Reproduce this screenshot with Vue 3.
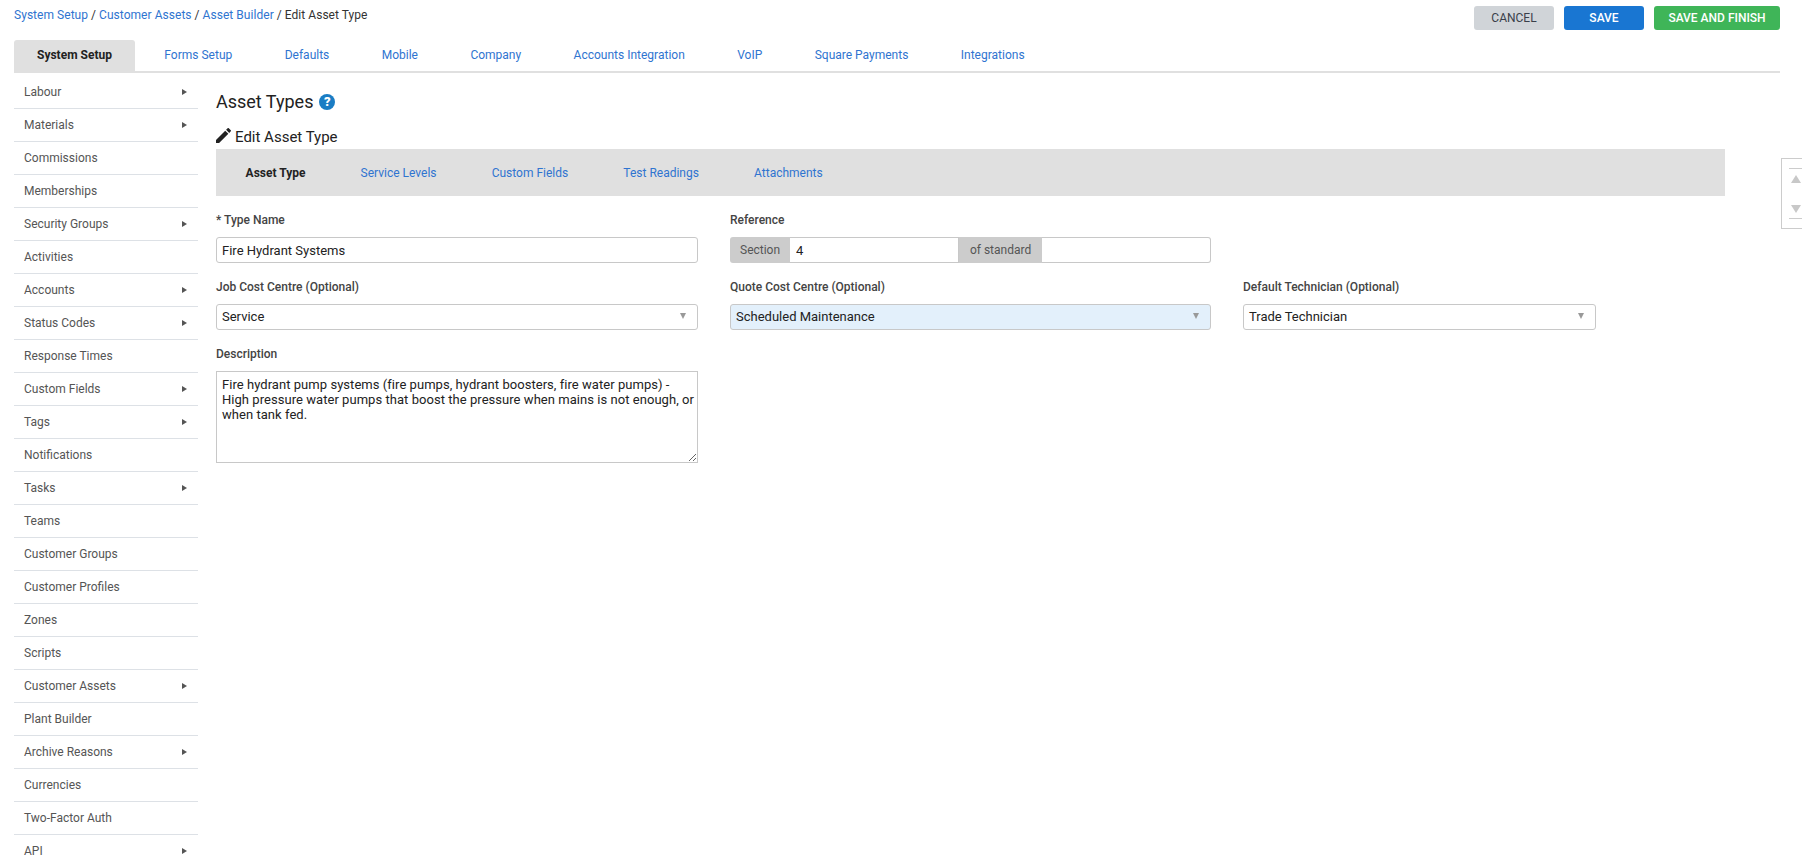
<template>
  <div class="page">
    <header class="top-bar">
      <nav class="crumbs">
        <template v-for="c in crumbs" :key="c">
          <a class="link">{{ c }}</a> /
        </template>
        <span class="crumb-current">Edit Asset Type</span>
      </nav>
      <div class="actions">
        <button class="btn btn--cancel">CANCEL</button>
        <button class="btn btn--save">SAVE</button>
        <button class="btn btn--finish">SAVE AND FINISH</button>
      </div>
    </header>

    <nav class="main-tabs">
      <a
        v-for="(tab, i) in mainTabs"
        :key="tab"
        class="main-tab"
        :class="{ 'main-tab--active': i === 0 }"
      >{{ tab }}</a>
    </nav>

    <div class="body">
      <ul class="side-menu">
        <li v-for="item in menu" :key="item.label" class="side-item">
          <span>{{ item.label }}</span>
          <i v-if="item.sub" class="side-arrow"></i>
        </li>
      </ul>

      <main class="content">
        <h1 class="title">
          Asset Types
          <span class="help">?</span>
        </h1>
        <h2 class="subtitle">
          <svg class="pencil" viewBox="3 3 18 18" aria-hidden="true">
            <path d="M3 17.25V21h3.75L17.81 9.94l-3.75-3.75L3 17.25zM20.71 7.04a1 1 0 0 0 0-1.41l-2.34-2.34a1 1 0 0 0-1.41 0l-1.83 1.83 3.75 3.75 1.83-1.83z" />
          </svg>
          Edit Asset Type
        </h2>

        <nav class="sub-tabs">
          <a
            v-for="(tab, i) in subTabs"
            :key="tab"
            class="sub-tab"
            :class="{ 'sub-tab--active': i === 0 }"
          >{{ tab }}</a>
        </nav>

        <form class="form" @submit.prevent>
          <div class="field">
            <label class="field-label">* Type Name</label>
            <input class="control" type="text" value="Fire Hydrant Systems" />
          </div>
          <div class="field">
            <label class="field-label">Reference</label>
            <div class="input-group">
              <span class="addon addon--first">Section</span>
              <input class="group-input" type="text" value="4" />
              <span class="addon">of standard</span>
              <input class="group-input group-input--last" type="text" />
            </div>
          </div>

          <div class="field field--new-row">
            <label class="field-label">Job Cost Centre (Optional)</label>
            <div class="control select">Service<i class="select-arrow"></i></div>
          </div>
          <div class="field">
            <label class="field-label">Quote Cost Centre (Optional)</label>
            <div class="control select select--changed">Scheduled Maintenance<i class="select-arrow"></i></div>
          </div>
          <div class="field">
            <label class="field-label">Default Technician (Optional)</label>
            <div class="control select">Trade Technician<i class="select-arrow"></i></div>
          </div>

          <div class="field field--new-row">
            <label class="field-label">Description</label>
            <textarea class="control textarea" :value="description"></textarea>
          </div>
        </form>
      </main>
    </div>

    <aside class="scroller">
      <i class="scroll-up"></i>
      <i class="scroll-down"></i>
    </aside>
  </div>
</template>

<script setup>
const crumbs = ['System Setup', 'Customer Assets', 'Asset Builder']

const mainTabs = [
  'System Setup',
  'Forms Setup',
  'Defaults',
  'Mobile',
  'Company',
  'Accounts Integration',
  'VoIP',
  'Square Payments',
  'Integrations',
]

const subTabs = ['Asset Type', 'Service Levels', 'Custom Fields', 'Test Readings', 'Attachments']

const menu = [
  { label: 'Labour', sub: true },
  { label: 'Materials', sub: true },
  { label: 'Commissions' },
  { label: 'Memberships' },
  { label: 'Security Groups', sub: true },
  { label: 'Activities' },
  { label: 'Accounts', sub: true },
  { label: 'Status Codes', sub: true },
  { label: 'Response Times' },
  { label: 'Custom Fields', sub: true },
  { label: 'Tags', sub: true },
  { label: 'Notifications' },
  { label: 'Tasks', sub: true },
  { label: 'Teams' },
  { label: 'Customer Groups' },
  { label: 'Customer Profiles' },
  { label: 'Zones' },
  { label: 'Scripts' },
  { label: 'Customer Assets', sub: true },
  { label: 'Plant Builder' },
  { label: 'Archive Reasons', sub: true },
  { label: 'Currencies' },
  { label: 'Two-Factor Auth' },
  { label: 'API', sub: true },
]

const description =
  'Fire hydrant pump systems (fire pumps, hydrant boosters, fire water pumps) - High pressure water pumps that boost the pressure when mains is not enough, or when tank fed.'
</script>

<style>
html,
body {
  height: 100%;
  overflow: hidden;
  background: #fff;
}
</style>

<style scoped>
.page {
  position: relative;
  height: 861px;
  padding: 6px 22px 0 14px;
  box-sizing: border-box;
  overflow: hidden;
  font-family: Roboto, "Liberation Sans", sans-serif;
  font-size: 12px;
  color: #555;
}

.link {
  color: #2f74d0;
}

.top-bar {
  display: flex;
  justify-content: space-between;
  height: 24px;
}

.crumbs {
  line-height: 18px;
  letter-spacing: 0.04px;
  color: #333;
}

.crumb-current {
  color: #333;
}

.actions {
  display: flex;
  gap: 10px;
}

.btn {
  height: 24px;
  padding: 0;
  border: 0;
  border-radius: 3px;
  font-family: inherit;
  font-size: 12px;
  font-weight: 500;
  color: #fff;
}

.btn--cancel {
  width: 80px;
  background: #d0d4d8;
  color: #3a3f4a;
  font-weight: 400;
}

.btn--save {
  width: 80px;
  background: #1976d2;
}

.btn--finish {
  width: 126px;
  background: #3fb558;
}

.main-tabs {
  display: flex;
  height: 31px;
  margin-top: 10px;
  border-bottom: 2px solid #e0e0e0;
}

.main-tab {
  margin-right: 6.45px;
  padding: 0 23px;
  line-height: 30px;
  color: #2f74d0;
}

.main-tab--active {
  border-radius: 3px 3px 0 0;
  background: #e0e0e0;
  color: #222;
  font-weight: 700;
}

.body {
  display: flex;
}

.side-menu {
  flex: none;
  width: 184px;
  margin: 3px 0 0;
  padding: 0;
  list-style: none;
}

.side-item {
  display: flex;
  align-items: center;
  justify-content: space-between;
  height: 33px;
  padding: 0 11px 1px 10px;
  box-sizing: border-box;
  border-bottom: 1px solid #dde1e6;
}

.side-arrow {
  border-left: 5px solid #555;
  border-top: 3.5px solid transparent;
  border-bottom: 3.5px solid transparent;
}

.content {
  flex: none;
  width: 1509px;
  margin-left: 18px;
}

.title {
  display: flex;
  align-items: center;
  gap: 6px;
  margin: 17px 0 0;
  font-size: 18px;
  font-weight: 400;
  line-height: 24px;
  color: #222;
}

.help {
  display: inline-flex;
  align-items: center;
  justify-content: center;
  width: 16px;
  height: 16px;
  border-radius: 50%;
  background: #1a7dc4;
  color: #fff;
  font-size: 13px;
  font-weight: 900;
}

.subtitle {
  display: flex;
  align-items: center;
  gap: 4px;
  margin: 13px 0 0;
  font-size: 15px;
  font-weight: 400;
  line-height: 20px;
  color: #222;
}

.pencil {
  width: 15px;
  height: 15px;
  margin-top: -3px;
  fill: #222;
}

.sub-tabs {
  display: flex;
  height: 47px;
  margin-top: 2px;
  padding-left: 2px;
  background: #e0e0e0;
}

.sub-tab {
  padding: 1px 27.57px 0;
  line-height: 46px;
  color: #2f74d0;
}

.sub-tab--active {
  color: #222;
  font-weight: 700;
}

.form {
  display: grid;
  grid-template-columns: 482px 481px 353px;
  column-gap: 32px;
  row-gap: 16px;
  margin-top: 16px;
}

.field {
  display: flex;
  flex-direction: column;
  gap: 9px;
}

.field--new-row {
  grid-column: 1;
}

.field-label {
  font-weight: 500;
  line-height: 16px;
  color: #444;
}

.control {
  height: 26px;
  padding: 0 5px;
  box-sizing: border-box;
  border: 1px solid #c8c8c8;
  border-radius: 3px;
  font-family: inherit;
  font-size: 13px;
  color: #222;
  background: #fff;
}

.select {
  position: relative;
  line-height: 24px;
}

.select--changed {
  background: #e3f0fb;
}

.select-arrow {
  position: absolute;
  top: 8px;
  right: 11px;
  border-top: 6px solid #999;
  border-left: 3.5px solid transparent;
  border-right: 3.5px solid transparent;
}

.textarea {
  display: block;
  height: 92px;
  padding: 5px 2px 5px 5px;
  border-radius: 0;
  line-height: 15px;
  letter-spacing: 0.045px;
}

.input-group {
  display: flex;
  height: 26px;
}

.addon {
  display: flex;
  align-items: center;
  padding: 0 10.5px;
  background: #ccc;
  color: #555;
}

.addon--first {
  padding: 0 10px;
  border-radius: 3px 0 0 3px;
}

.group-input {
  flex: 1;
  min-width: 0;
  padding: 0 5px 0 6px;
  border: 1px solid #c8c8c8;
  border-left: 0;
  font-family: inherit;
  font-size: 13px;
  color: #222;
}

.group-input--last {
  border-radius: 0 3px 3px 0;
}

.scroller {
  position: absolute;
  top: 158px;
  right: -1px;
  display: flex;
  flex-direction: column;
  gap: 22px;
  width: 22px;
  height: 71px;
  padding: 16px 0 0 9px;
  box-sizing: border-box;
  border: 1px solid #ccc;
}

.scroll-up {
  width: 0;
  border-bottom: 8px solid #c8c8c8;
  border-left: 5px solid transparent;
  border-right: 5px solid transparent;
}

.scroll-down {
  width: 0;
  border-top: 8px solid #c8c8c8;
  border-left: 5px solid transparent;
  border-right: 5px solid transparent;
}

.scroller::before,
.scroller::after {
  content: "";
  position: absolute;
  left: 7px;
  right: 0;
  border-top: 1px solid #ccc;
}

.scroller::before {
  top: 9px;
}

.scroller::after {
  bottom: 9px;
}
</style>
